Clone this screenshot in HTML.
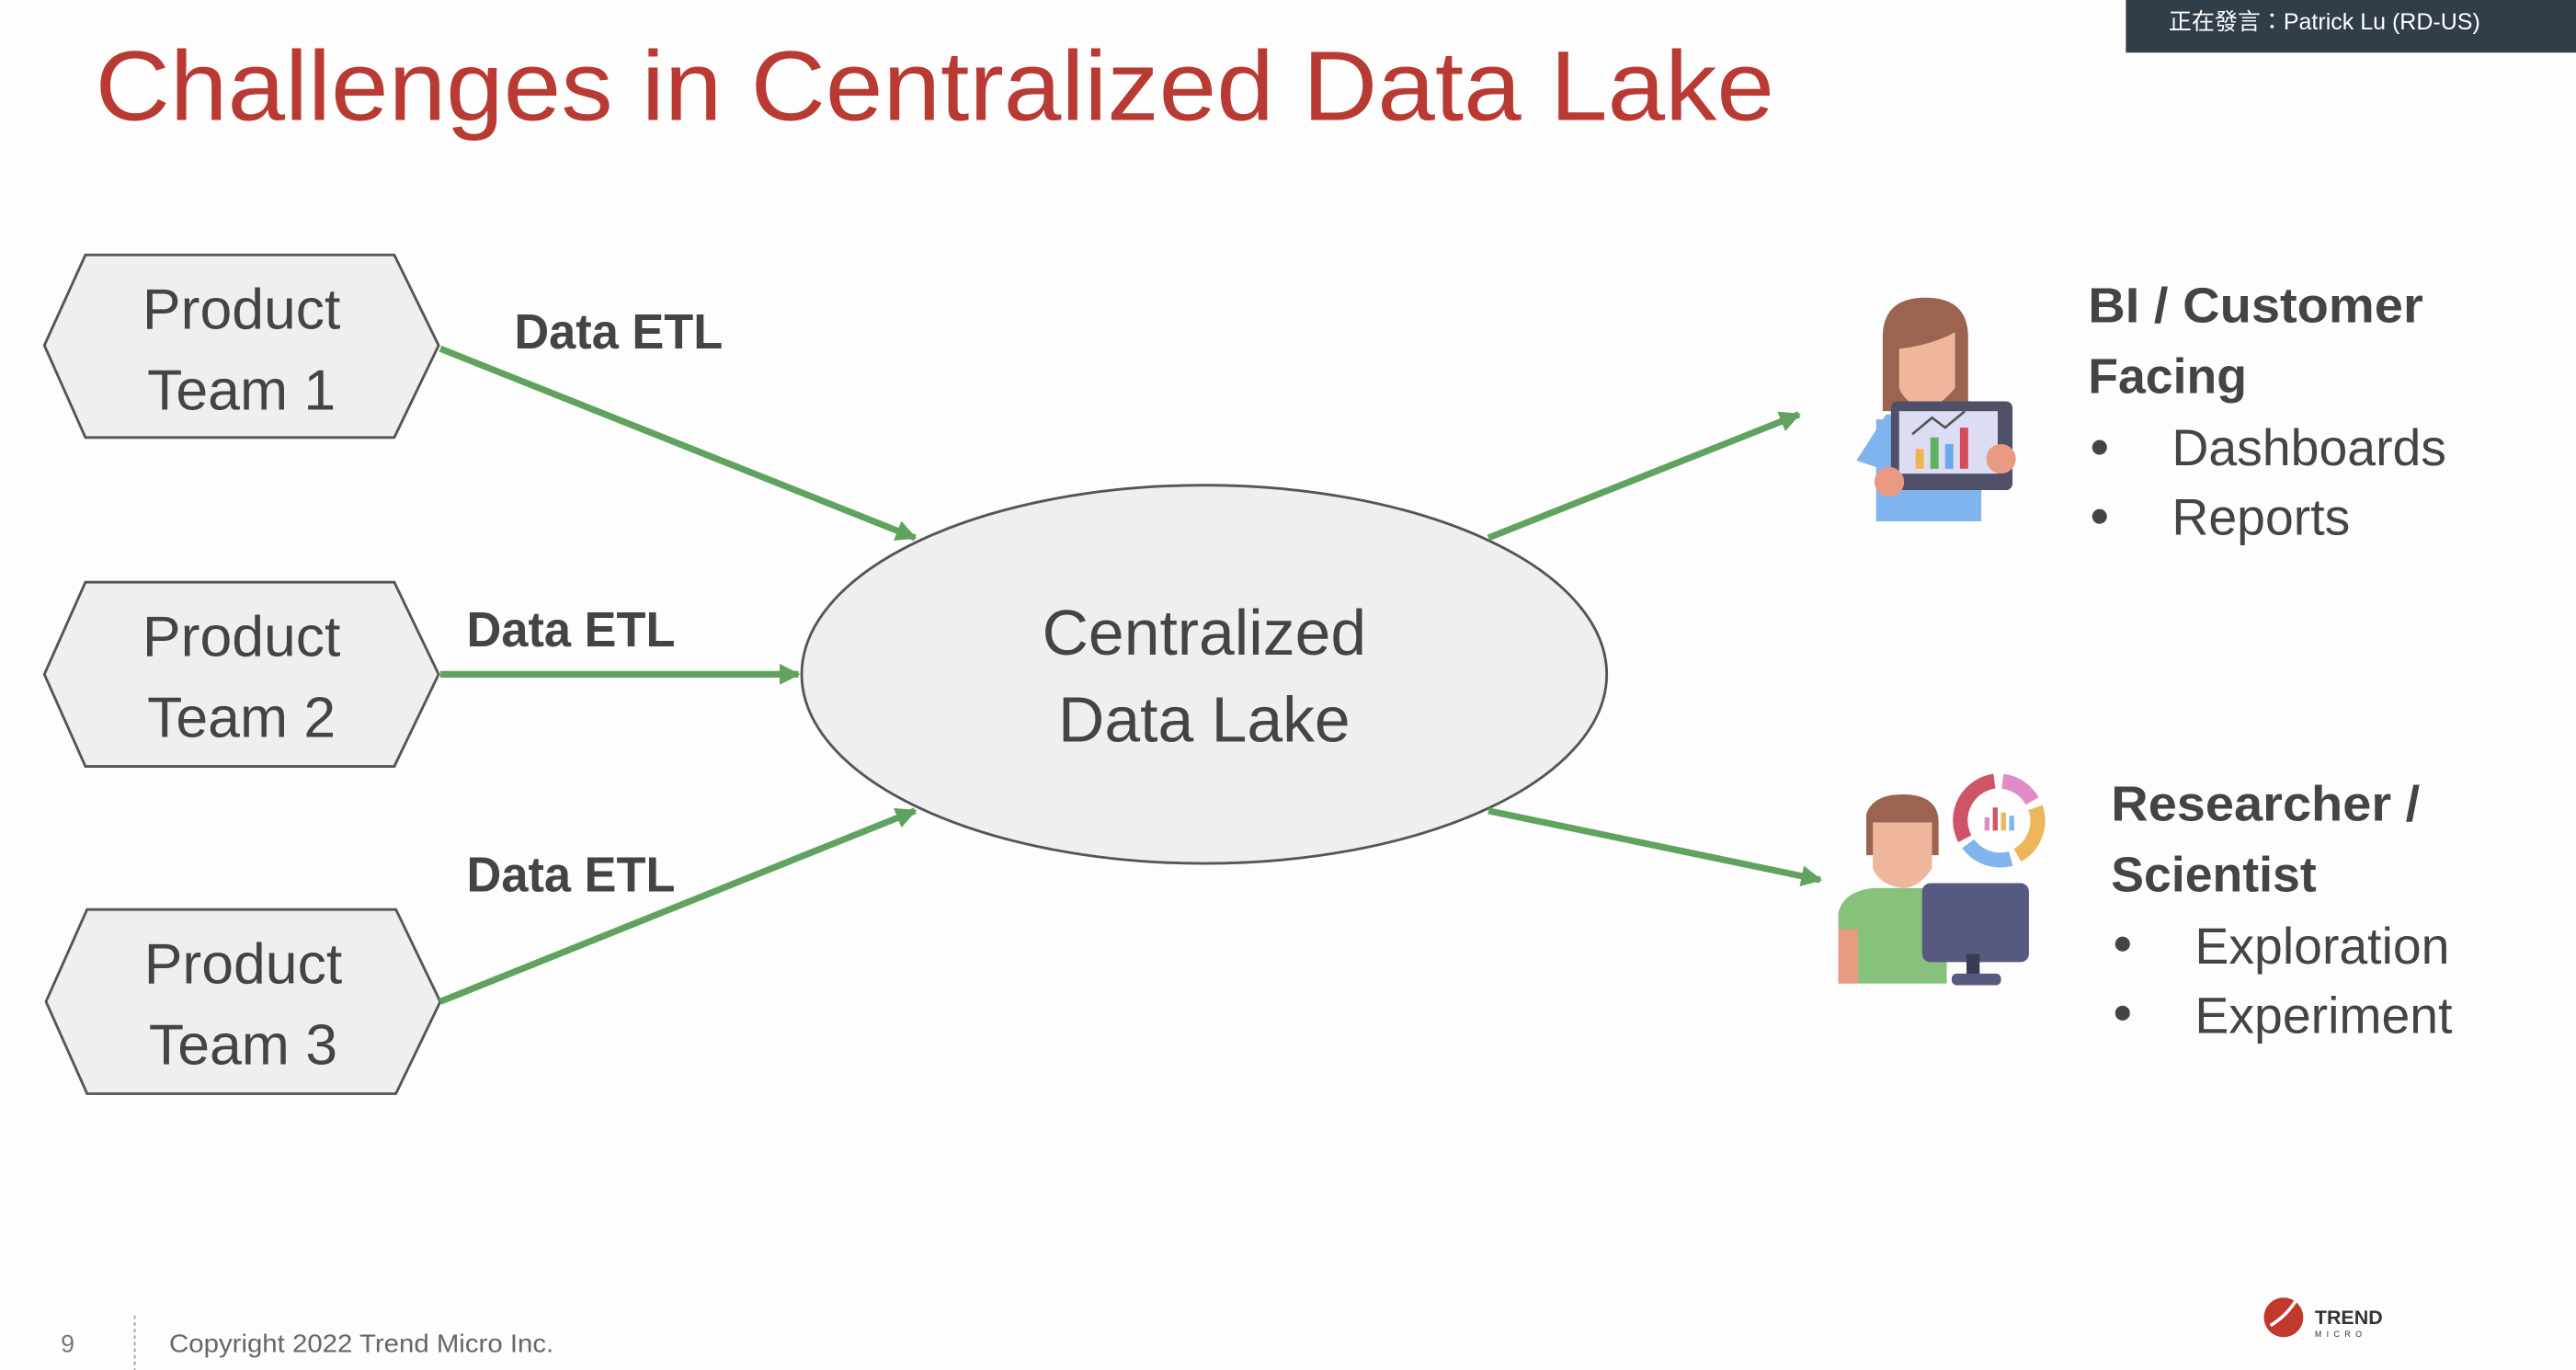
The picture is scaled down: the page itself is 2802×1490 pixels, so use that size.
<!DOCTYPE html>
<html><head><meta charset="utf-8"><style>
html,body{margin:0;padding:0;background:#fdfdfd;}
svg{display:block;}
text{font-family:"Liberation Sans","Noto Sans CJK TC",sans-serif;}
</style></head><body>
<svg width="2802" height="1490" viewBox="0 0 1568 833" preserveAspectRatio="none" xmlns="http://www.w3.org/2000/svg">
<defs>
<marker id="ah" viewBox="0 0 10 10" refX="9" refY="5" markerWidth="3.2" markerHeight="3.2" orient="auto"><path d="M0,0 L10,5 L0,10 z" fill="#5fa35f"/></marker>
</defs>
<rect width="1568" height="833" fill="#fdfdfd"/>
<text x="58" y="73" font-size="60" fill="#b83a33" textLength="1022" lengthAdjust="spacingAndGlyphs">Challenges in Centralized Data Lake</text>

<g fill="#efefef" stroke="#555" stroke-width="1.6">
<polygon points="27,210 52,155 240,155 267,210 240,266 52,266"/>
<polygon points="27,410 52,354 240,354 267,410 240,466 52,466"/>
<polygon points="28,609 53,553 241,553 268,609 241,665 53,665"/>
<ellipse cx="733" cy="410" rx="245" ry="115"/>
</g>
<g fill="#444" font-size="35" text-anchor="middle">
<text x="147" y="200">Product</text><text x="147" y="249">Team 1</text>
<text x="147" y="399">Product</text><text x="147" y="448">Team 2</text>
<text x="148" y="598">Product</text><text x="148" y="647">Team 3</text>
<text x="733" y="398" font-size="39">Centralized</text><text x="733" y="451" font-size="39">Data Lake</text>
</g>
<g stroke="#5fa35f" stroke-width="4" marker-end="url(#ah)">
<line x1="268" y1="212" x2="557" y2="327"/>
<line x1="268" y1="410" x2="486" y2="410"/>
<line x1="268" y1="609" x2="557" y2="493"/>
<line x1="906" y1="327" x2="1095" y2="252"/>
<line x1="906" y1="493" x2="1108" y2="535"/>
</g>
<g fill="#444" font-size="30" font-weight="bold">
<text x="313" y="212" textLength="127" lengthAdjust="spacingAndGlyphs">Data ETL</text>
<text x="284" y="393" textLength="127" lengthAdjust="spacingAndGlyphs">Data ETL</text>
<text x="284" y="542" textLength="127" lengthAdjust="spacingAndGlyphs">Data ETL</text>
<text x="1271" y="196" textLength="204" lengthAdjust="spacingAndGlyphs">BI / Customer</text>
<text x="1271" y="239">Facing</text>
<text x="1285" y="499" textLength="188" lengthAdjust="spacingAndGlyphs">Researcher /</text>
<text x="1285" y="542">Scientist</text>
</g>
<g fill="#444" font-size="31">
<circle cx="1278" cy="272" r="4.5"/><circle cx="1278" cy="314" r="4.5"/>
<circle cx="1292" cy="574" r="4.5"/><circle cx="1292" cy="616" r="4.5"/>
<text x="1322" y="283">Dashboards</text><text x="1322" y="325">Reports</text>
<text x="1336" y="586">Exploration</text><text x="1336" y="628">Experiment</text>
</g>

<!-- woman -->
<path d="M1146,250 L1146,205 Q1146,181 1172,181 Q1198,181 1198,205 L1198,250 Z" fill="#9a6450"/>
<path d="M1156,212 Q1175,210 1190,202 L1190,236 Q1180,248 1172,248 Q1160,246 1156,236 Z" fill="#eeb79b"/>
<rect x="1142" y="255" width="64" height="62" fill="#7fb4ee"/>
<path d="M1130,280 L1148,252 L1160,252 L1160,290 Z" fill="#7fb4ee"/>
<rect x="1151" y="244" width="74" height="54" rx="4" fill="#4f5068"/>
<rect x="1156" y="250" width="60" height="38" fill="#dcdcf2"/>
<rect x="1166" y="273" width="5" height="12" fill="#f0b54a"/><rect x="1175" y="266" width="5" height="19" fill="#5fb05f"/><rect x="1184" y="270" width="5" height="15" fill="#6aa8f0"/><rect x="1193" y="260" width="5" height="25" fill="#d84a5a"/>
<polyline points="1164,264 1176,254 1184,260 1196,250" fill="none" stroke="#555" stroke-width="1.5"/>
<circle cx="1218" cy="279" r="9" fill="#e89a82"/><circle cx="1150" cy="293" r="9" fill="#e89a82"/>

<!-- man -->
<g fill="none" stroke-width="9">
<path d="M1196,510 A24,24 0 0 1 1214,475" stroke="#d05468"/>
<path d="M1219,475 A24,24 0 0 1 1237,487" stroke="#e08ac8"/>
<path d="M1239,491 A24,24 0 0 1 1228,520" stroke="#ebb75a"/>
<path d="M1224,522 A24,24 0 0 1 1198,513" stroke="#7fb4ee"/>
</g>
<rect x="1208" y="497" width="3" height="8" fill="#e08ac8"/><rect x="1213" y="491" width="3" height="14" fill="#d05468"/><rect x="1218" y="494" width="3" height="11" fill="#ebb75a"/><rect x="1223" y="496" width="3" height="9" fill="#7fb4ee"/>
<path d="M1136,520 L1136,495 Q1140,483 1158,483 Q1180,483 1180,500 L1180,520 Z" fill="#9a6450"/>
<path d="M1140,500 L1176,500 L1176,528 Q1168,540 1158,540 Q1144,538 1140,528 Z" fill="#eeb79b"/>
<path d="M1119,598 L1119,555 Q1122,542 1140,540 L1185,540 L1185,598 Z" fill="#86c27c"/>
<rect x="1119" y="565" width="12" height="33" fill="#e89a82"/>
<rect x="1170" y="537" width="65" height="48" rx="5" fill="#575a80"/>
<rect x="1197" y="580" width="8" height="14" fill="#3a3b52"/>
<rect x="1188" y="592" width="30" height="7" rx="3" fill="#575a80"/>

<!-- top bar -->
<rect x="1294" y="0" width="274" height="32" fill="#323d4a"/>
<text x="1320" y="18" font-size="14" fill="#fff">正在發言：Patrick Lu (RD-US)</text>

<!-- footer -->
<text x="37" y="822" font-size="15" fill="#777">9</text>
<line x1="82" y1="800" x2="82" y2="833" stroke="#999" stroke-dasharray="2,2"/>
<text x="103" y="822" font-size="15.5" fill="#666" textLength="234" lengthAdjust="spacingAndGlyphs">Copyright 2022 Trend Micro Inc.</text>
<circle cx="1390" cy="801" r="12" fill="#c0392b"/>
<path d="M1382,806 Q1392,800 1398,790" stroke="#fff" stroke-width="2" fill="none"/>
<text x="1409" y="805" font-size="12" font-weight="bold" fill="#333">TREND</text>
<text x="1409" y="813" font-size="5" fill="#333" letter-spacing="3">MICRO</text>
</svg>
</body></html>
